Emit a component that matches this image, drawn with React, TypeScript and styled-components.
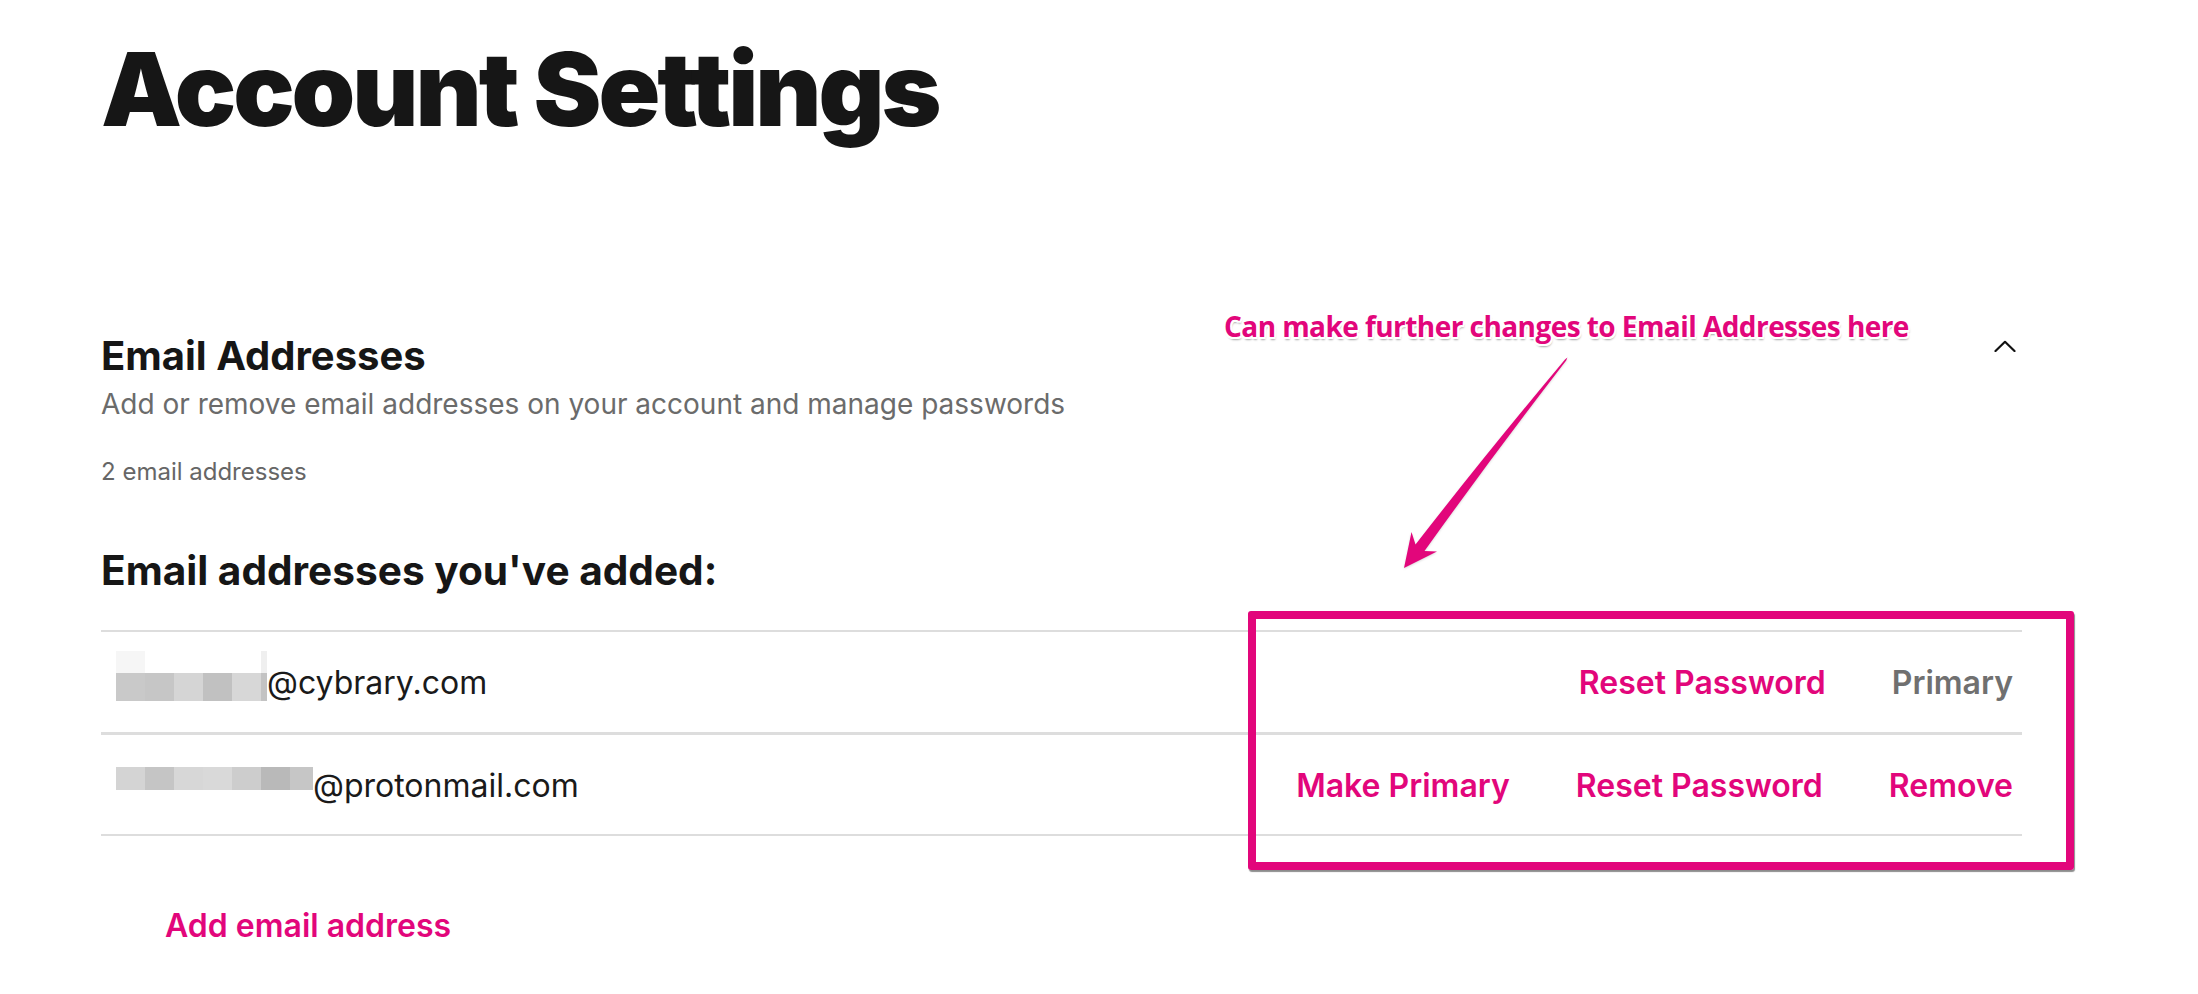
import styled, { createGlobalStyle } from 'styled-components';

const PINK = '#e2067b';

const GlobalStyle = createGlobalStyle`
  html, body {
    margin: 0;
    padding: 0;
    background: #ffffff;
  }
  body {
    font-family: Inter, 'Noto Sans', sans-serif;
    color: #161616;
  }
`;

type MosaicSpec = {
  cols: number[];
  rows: number[];
  colors: string[][];
};

type EmailEntry = {
  id: string;
  domain: string;
  mosaic: MosaicSpec;
  primary: boolean;
};

const emails: EmailEntry[] = [
  {
    id: 'work',
    domain: '@cybrary.com',
    primary: true,
    mosaic: {
      cols: [29, 29, 29, 29, 29, 6],
      rows: [22, 28],
      colors: [
        ['#f6f6f6', '#ffffff', '#ffffff', '#ffffff', '#ffffff', '#efefef'],
        ['#c9c9c9', '#c6c6c6', '#d5d5d5', '#c1c1c1', '#d7d7d7', '#c3c3c3'],
      ],
    },
  },
  {
    id: 'personal',
    domain: '@protonmail.com',
    primary: false,
    mosaic: {
      cols: [29, 29, 29, 29, 29, 29, 23],
      rows: [23],
      colors: [['#d4d4d4', '#c5c5c5', '#d7d7d7', '#d9d9d9', '#cdcdcd', '#b9b9b9', '#c6c6c6']],
    },
  },
];

const Mosaic = ({ spec }: { spec: MosaicSpec }) => (
  <MosaicGrid
    $cols={spec.cols.map((c) => `${c}px`).join(' ')}
    $rows={spec.rows.map((r) => `${r}px`).join(' ')}
  >
    {spec.colors.flatMap((row, ri) =>
      row.map((c, ci) => <MosaicCell key={`${ri}-${ci}`} $c={c} />)
    )}
  </MosaicGrid>
);

const ChevronUp = () => (
  <svg width='22' height='12' viewBox='0 0 22 12' fill='none'>
    <polyline
      points='1.5,11 11,1.8 20.5,11'
      stroke='#111'
      strokeWidth='2.2'
      strokeLinecap='round'
      strokeLinejoin='round'
    />
  </svg>
);

// hand-drawn style annotation arrow, tapered from tail to head
const Arrow = () => (
  <ArrowSvg width='190' height='230' viewBox='0 0 190 230'>
    <path
      d='M14 218 L47 201.5 L34.5 201 Q 101 108 176.2 10.5 L177.4 7.6 L175 9.5 Q 95 105 25.5 194.5 L21.5 182 Z'
      fill={PINK}
    />
  </ArrowSvg>
);

export default function App() {
  return (
    <>
      <GlobalStyle />
      <Page>
        <Title>Account Settings</Title>

        <Section>
          <SectionHeader>
            <SectionTitle>Email Addresses</SectionTitle>
            <Toggle aria-label='Collapse'>
              <ChevronUp />
            </Toggle>
          </SectionHeader>
          <Description>Add or remove email addresses on your account and manage passwords</Description>
          <Count>2 email addresses</Count>

          <ListTitle>Email addresses you've added:</ListTitle>
          <EmailList>
            {emails.map((e) => (
              <EmailRow key={e.id}>
                <Address>
                  <Mosaic spec={e.mosaic} />
                  <Domain>{e.domain}</Domain>
                </Address>
                <Actions>
                  {!e.primary && <ActionLink>Make Primary</ActionLink>}
                  <ActionLink>Reset Password</ActionLink>
                  {e.primary ? <PrimaryLabel>Primary</PrimaryLabel> : <ActionLink>Remove</ActionLink>}
                </Actions>
              </EmailRow>
            ))}
          </EmailList>

          <AddLink>Add email address</AddLink>
        </Section>

        <Note>Can make further changes to Email Addresses here</Note>
        <Arrow />
        <Highlight />
      </Page>
    </>
  );
}

const Page = styled.div`
  position: relative;
  box-sizing: border-box;
  width: 2198px;
  min-height: 994px;
  padding: 38px 176px 40px 101px;
`;

const Title = styled.h1`
  margin: 0;
  font-family: Inter, sans-serif;
  font-weight: 900;
  font-size: 102px;
  line-height: 102px;
  letter-spacing: -0.03em;
  color: #161616;
`;

const Section = styled.section`
  margin-top: 192px;
  display: flex;
  flex-direction: column;
`;

const SectionHeader = styled.div`
  display: flex;
  justify-content: space-between;
  align-items: flex-start;
`;

const SectionTitle = styled.h2`
  margin: 0;
  font-size: 40px;
  line-height: 48px;
  font-weight: 700;
  color: #161616;
`;

const Toggle = styled.button`
  border: none;
  background: none;
  padding: 0;
  margin: 8px 6px 0 0;
  display: flex;
  cursor: pointer;
`;

const Description = styled.p`
  margin: 6px 0 0;
  font-size: 28px;
  line-height: 36px;
  color: #6b6b6b;
`;

const Count = styled.p`
  margin: 35px 0 0;
  font-size: 24px;
  line-height: 30px;
  color: #666666;
`;

const ListTitle = styled.h3`
  margin: 60px 0 0;
  font-size: 40.6px;
  line-height: 48px;
  font-weight: 700;
  color: #161616;
`;

const EmailList = styled.ul`
  list-style: none;
  margin: 35px 0 0;
  padding: 0;
`;

const EmailRow = styled.li`
  display: flex;
  align-items: center;
  justify-content: space-between;
  height: 100px;
  padding: 2px 9px 0 15px;
  box-sizing: border-box;
  height: 103px;
  border-top: 2px solid #dddddd;
  border-bottom: 1px solid #dddddd;

  &:last-child {
    border-bottom-width: 2px;
  }
`;

const Address = styled.div`
  display: flex;
  align-items: center;
`;

const MosaicGrid = styled.div<{ $cols: string; $rows: string }>`
  display: grid;
  grid-template-columns: ${(p) => p.$cols};
  grid-template-rows: ${(p) => p.$rows};
  margin-bottom: 15px;
`;

const MosaicCell = styled.span<{ $c: string }>`
  background: ${(p) => p.$c};
`;

const Domain = styled.span`
  font-size: 32px;
  line-height: 40px;
  color: #1a1a1a;
`;

const Actions = styled.div`
  display: flex;
  align-items: center;
  gap: 66px;
`;

const ActionLink = styled.a`
  font-size: 32px;
  line-height: 40px;
  font-weight: 600;
  color: ${PINK};
  cursor: pointer;
`;

const PrimaryLabel = styled.span`
  font-size: 32px;
  line-height: 40px;
  font-weight: 600;
  color: #707070;
`;

const AddLink = styled.a`
  align-self: flex-start;
  margin: 70px 0 0 64px;
  font-size: 32px;
  line-height: 40px;
  font-weight: 600;
  color: ${PINK};
  cursor: pointer;
`;

const Note = styled.div`
  position: absolute;
  left: 1224px;
  top: 312px;
  font-family: 'Open Sans', sans-serif;
  font-weight: 700;
  font-size: 28px;
  line-height: 28px;
  letter-spacing: -0.02em;
  white-space: nowrap;
  color: ${PINK};
  text-shadow:
    -2px 0 #fff, 2px 0 #fff, 0 -2px #fff, 0 2px #fff,
    -1.5px -1.5px #fff, 1.5px 1.5px #fff, 1.5px -1.5px #fff, -1.5px 1.5px #fff,
    1px 3px 2px rgba(0, 0, 0, 0.35);
`;

const ArrowSvg = styled.svg`
  position: absolute;
  left: 1390px;
  top: 350px;
  filter: drop-shadow(0 1px 1px rgba(0, 0, 0, 0.15));
`;

const Highlight = styled.div`
  position: absolute;
  left: 1248px;
  top: 611px;
  width: 826px;
  height: 259px;
  box-sizing: border-box;
  border: 8px solid ${PINK};
  border-radius: 3px;
  box-shadow: 1px 2px 1px rgba(0, 0, 0, 0.45);
  pointer-events: none;
`;
